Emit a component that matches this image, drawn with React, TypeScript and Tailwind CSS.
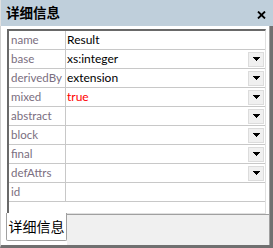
import React from "react";

const rows: { name: string; value: string; red?: boolean; dd: boolean }[] = [
  { name: "name", value: "Result", dd: false },
  { name: "base", value: "xs:integer", dd: true },
  { name: "derivedBy", value: "extension", dd: true },
  { name: "mixed", value: "true", red: true, dd: true },
  { name: "abstract", value: "", dd: true },
  { name: "block", value: "", dd: true },
  { name: "final", value: "", dd: true },
  { name: "defAttrs", value: "", dd: true },
  { name: "id", value: "", dd: false },
];

function Arrow() {
  return (
    <svg width="7" height="4" viewBox="0 0 7 4">
      <path d="M0 0H7V1H6V2H5V3H4V4H3V3H2V2H1V1H0Z" fill="#000" />
    </svg>
  );
}

export default function App() {
  const font = { fontFamily: 'Lato, "Noto Sans CJK SC", sans-serif' };
  return (
    <div className="w-[273px] h-[248px] bg-[#f0f0f0] flex flex-col overflow-hidden" style={font}>
      <div className="h-[26px] shrink-0 bg-[#bfcfdb] flex items-center justify-between pl-[5px] pr-[7px] border-l border-[#e0e0e0]">
        <span className="text-[13.5px] font-bold text-black leading-none" style={{ fontFamily: '"Noto Sans CJK SC", sans-serif' }}>详细信息</span>
        <svg width="9" height="8" viewBox="0 0 9 8" className="mt-[3px]">
          <path d="M1 0.5L8 7.5M8 0.5L1 7.5" stroke="#000" strokeWidth="1.8" />
        </svg>
      </div>
      <div className="flex-1 flex flex-col border-r-[3px] border-b-[3px] border-[#707070] border-l border-l-[#d0d0d0]">
        <div className="flex-1 bg-white border-r border-[#a0a0a0] flex flex-col pt-[3px] pl-[6px] pr-[3px]">
          <div className="h-[185px] border-t-2 border-l-2 border-[#696969] border-r border-b border-r-[#e0e0e0] border-b-[#e0e0e0] bg-white">
            {rows.map((r) => (
              <div key={r.name} className="h-[19px] flex border-b border-[#c8c8c8] text-[12px] leading-[18px]">
                <div className="w-[57px] shrink-0 border-r border-[#c8c8c8] pl-[2px] text-[11.5px] text-[#7a6e80] overflow-hidden whitespace-nowrap">{r.name}</div>
                <div className={`flex-1 flex items-center pl-[1px] pr-[1px] ${r.red ? "text-[#ff0000]" : "text-black"}`}>
                  <span className="flex-1 leading-[18px]">{r.value}</span>
                  {r.dd && (
                    <div className="w-[16px] h-[15px] bg-[#f0f0f0] border border-[#dcdcdc] flex items-center justify-center">
                      <Arrow />
                    </div>
                  )}
                </div>
              </div>
            ))}
          </div>
          <div className="flex-1 flex items-start -ml-[1px]">
            <div className="-mt-[1px] w-[61px] h-[28px] bg-white border-l border-r border-b border-[#a0a0a0] rounded-b-[2px] flex items-center justify-center text-[14px] text-black" style={{ fontFamily: '"Noto Sans CJK SC", sans-serif' }}>
              详细信息
            </div>
            <div className="flex-1 self-stretch bg-[#f0f0f0] border-t border-[#a0a0a0] -mr-[3px]" />
          </div>
        </div>
      </div>
    </div>
  );
}
